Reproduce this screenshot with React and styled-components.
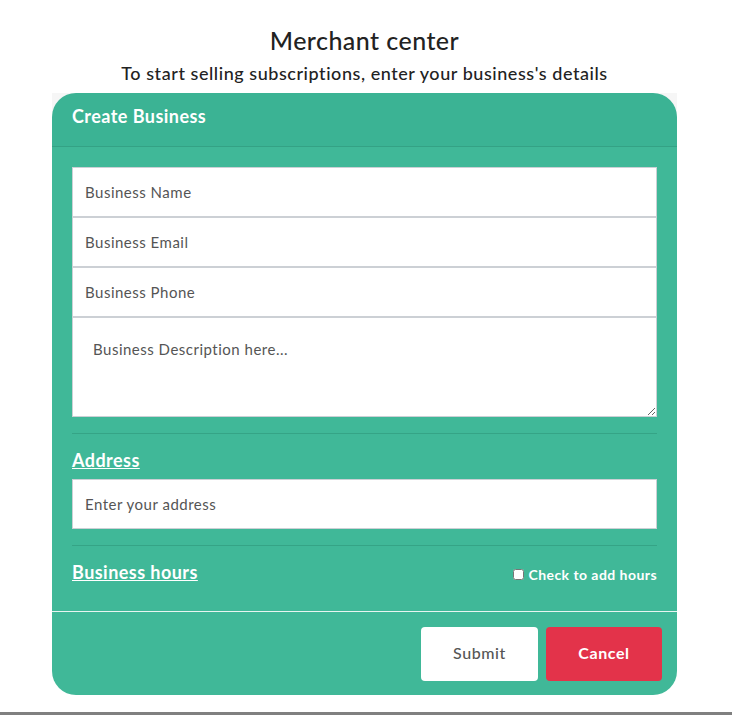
import React from "react";
import styled, { createGlobalStyle } from "styled-components";

const Global = createGlobalStyle`
  html, body { margin: 0; padding: 0; background: #fff; }
  body { font-family: "Lato", "Noto Sans", sans-serif; color: #212529; letter-spacing: 0.45px; }
  * { box-sizing: border-box; }
`;

const Page = styled.div`
  width: 729px;
  min-height: 712px;
  display: flex;
  flex-direction: column;
  align-items: center;
  padding-top: 25px;
`;

const Title = styled.h1`
  margin: 0;
  font-size: 25px;
  font-weight: 500;
  line-height: 30px;
  color: #222;
`;

const Subtitle = styled.p`
  margin: 4px 0 0;
  font-size: 18px;
  font-weight: 500;
  line-height: 28px;
  letter-spacing: 0.55px;
  color: #222;
`;

const Card = styled.div`
  width: 625px;
  margin-top: 6px;
  display: flex;
  flex-direction: column;
`;

const HeaderWrap = styled.div`
  background: #f6f6f6;
`;

const Header = styled.div`
  background: #3bb394;
  border-radius: 24px 24px 0 0;
  border-bottom: 1px solid #34a285;
  height: 54px;
  padding: 0 20px 8px;
  display: flex;
  align-items: center;
  color: #fff;
  font-size: 18px;
  font-weight: 700;
`;

const Body = styled.div`
  background: #40b898;
  padding: 20px 20px 0;
  display: flex;
  flex-direction: column;
`;

const InputStack = styled.div`
  display: flex;
  flex-direction: column;
`;

const Field = styled.input`
  height: 50px;
  width: 100%;
  border: 1px solid #ccd0d5;
  background: #fff;
  padding: 0 12px;
  font-family: inherit;
  font-size: 15px;
  letter-spacing: 0.5px;
  color: #555;
  outline: none;
  &::placeholder { color: #555; }
`;

const Area = styled.textarea`
  height: 100px;
  width: 100%;
  border: 1px solid #ccd0d5;
  background: #fff;
  padding: 22px 20px;
  font-family: inherit;
  font-size: 15px;
  letter-spacing: 0.5px;
  color: #555;
  resize: vertical;
  outline: none;
  display: block;
  &::placeholder { color: #555; }
`;

const Rule = styled.hr`
  margin: 16px 0 0;
  border: 0;
  border-top: 1px solid #35a486;
  height: 0;
`;

const SectionLabel = styled.a`
  color: #fff;
  font-size: 18px;
  font-weight: 700;
  text-decoration: underline;
  line-height: 22px;
`;

const AddressBlock = styled.div`
  display: flex;
  flex-direction: column;
  padding-top: 15px;
  gap: 8px;
`;

const HoursRow = styled.div`
  display: flex;
  justify-content: space-between;
  align-items: center;
  padding: 15px 0 28px;
`;

const CheckLabel = styled.label`
  display: flex;
  align-items: center;
  gap: 4px;
  color: #fff;
  font-size: 14px;
  font-weight: 700;
  padding-top: 4px;
`;

const Check = styled.input`
  width: 11px;
  height: 11px;
  margin: 0;
`;

const Footer = styled.div`
  background: #40b898;
  border-top: 1px solid #e8f5f1;
  border-radius: 0 0 24px 24px;
  padding: 15px 15px 14px;
  display: flex;
  justify-content: flex-end;
  gap: 8px;
`;

const Button = styled.button`
  width: ${(p) => (p.$danger ? "116px" : "117px")};
  height: 54px;
  border: none;
  border-radius: 4px;
  padding: 0 0 3px;
  background: ${(p) => (p.$danger ? "#e3334a" : "#fff")};
  color: ${(p) => (p.$danger ? "#fff" : "#555")};
  font-family: inherit;
  font-size: 16px;
  font-weight: ${(p) => (p.$danger ? 700 : 500)};
  letter-spacing: 0.6px;
`;

const BottomBar = styled.div`
  position: fixed;
  left: 0;
  right: 0;
  bottom: 0;
  height: 3px;
  background: #808080;
`;

export default function App() {
  return (
    <>
      <Global />
      <Page>
        <Title>Merchant center</Title>
        <Subtitle>To start selling subscriptions, enter your business's details</Subtitle>
        <Card>
          <HeaderWrap>
            <Header>Create Business</Header>
          </HeaderWrap>
          <Body>
            <InputStack>
              <Field placeholder="Business Name" />
              <Field placeholder="Business Email" />
              <Field placeholder="Business Phone" />
              <Area placeholder="Business Description here..." />
            </InputStack>
            <Rule />
            <AddressBlock>
              <SectionLabel href="#">Address</SectionLabel>
              <Field placeholder="Enter your address" />
            </AddressBlock>
            <Rule />
            <HoursRow>
              <SectionLabel href="#">Business hours</SectionLabel>
              <CheckLabel>
                <Check type="checkbox" />
                Check to add hours
              </CheckLabel>
            </HoursRow>
          </Body>
          <Footer>
            <Button>Submit</Button>
            <Button $danger>Cancel</Button>
          </Footer>
        </Card>
      </Page>
      <BottomBar />
    </>
  );
}
